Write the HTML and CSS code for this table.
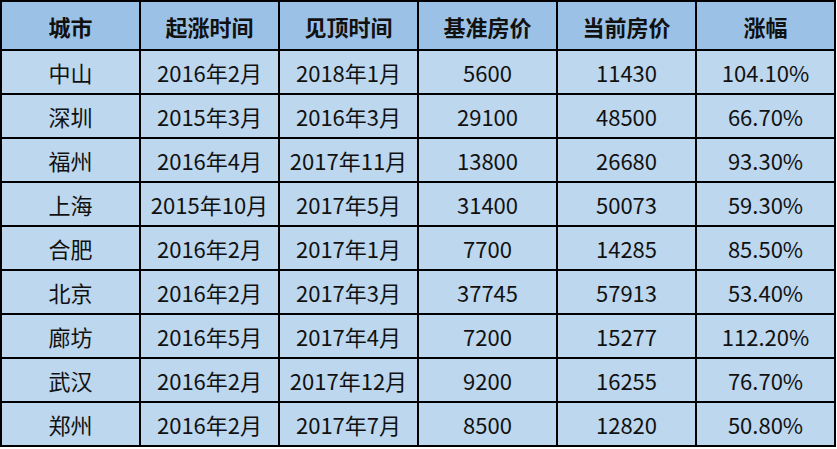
FILE: index.html
```html
<!DOCTYPE html>
<html lang="zh">
<head>
<meta charset="utf-8">
<link rel="stylesheet" href="styles.css">
</head>
<body>
<div class="sheet">
  <div class="c h">城市</div><div class="c h">起涨时间</div><div class="c h">见顶时间</div><div class="c h">基准房价</div><div class="c h">当前房价</div><div class="c h">涨幅</div>
  <div class="c">中山</div><div class="c">2016年2月</div><div class="c">2018年1月</div><div class="c">5600</div><div class="c">11430</div><div class="c">104.10%</div>
  <div class="c">深圳</div><div class="c">2015年3月</div><div class="c">2016年3月</div><div class="c">29100</div><div class="c">48500</div><div class="c">66.70%</div>
  <div class="c">福州</div><div class="c">2016年4月</div><div class="c">2017年11月</div><div class="c">13800</div><div class="c">26680</div><div class="c">93.30%</div>
  <div class="c">上海</div><div class="c">2015年10月</div><div class="c">2017年5月</div><div class="c">31400</div><div class="c">50073</div><div class="c">59.30%</div>
  <div class="c">合肥</div><div class="c">2016年2月</div><div class="c">2017年1月</div><div class="c">7700</div><div class="c">14285</div><div class="c">85.50%</div>
  <div class="c">北京</div><div class="c">2016年2月</div><div class="c">2017年3月</div><div class="c">37745</div><div class="c">57913</div><div class="c">53.40%</div>
  <div class="c">廊坊</div><div class="c">2016年5月</div><div class="c">2017年4月</div><div class="c">7200</div><div class="c">15277</div><div class="c">112.20%</div>
  <div class="c">武汉</div><div class="c">2016年2月</div><div class="c">2017年12月</div><div class="c">9200</div><div class="c">16255</div><div class="c">76.70%</div>
  <div class="c">郑州</div><div class="c">2016年2月</div><div class="c">2017年7月</div><div class="c">8500</div><div class="c">12820</div><div class="c">50.80%</div>
</div>
</body>
</html>
```
FILE: styles.css
```css
html, body {
  margin: 0;
  padding: 0;
  background: #ffffff;
}
.sheet {
  display: grid;
  grid-template-columns: repeat(6, 137px);
  grid-template-rows: 47px repeat(9, 42px);
  gap: 2px;
  padding: 2px;
  width: max-content;
  background: #000000;
  font-family: "Noto Sans CJK SC", "Noto Sans", sans-serif;
  font-size: 22px;
  color: #111111;
}
.c {
  background: #bdd7ee;
  display: flex;
  align-items: center;
  justify-content: center;
  white-space: nowrap;
}
.h {
  background: #9bc2e6;
  font-weight: bold;
}
```
